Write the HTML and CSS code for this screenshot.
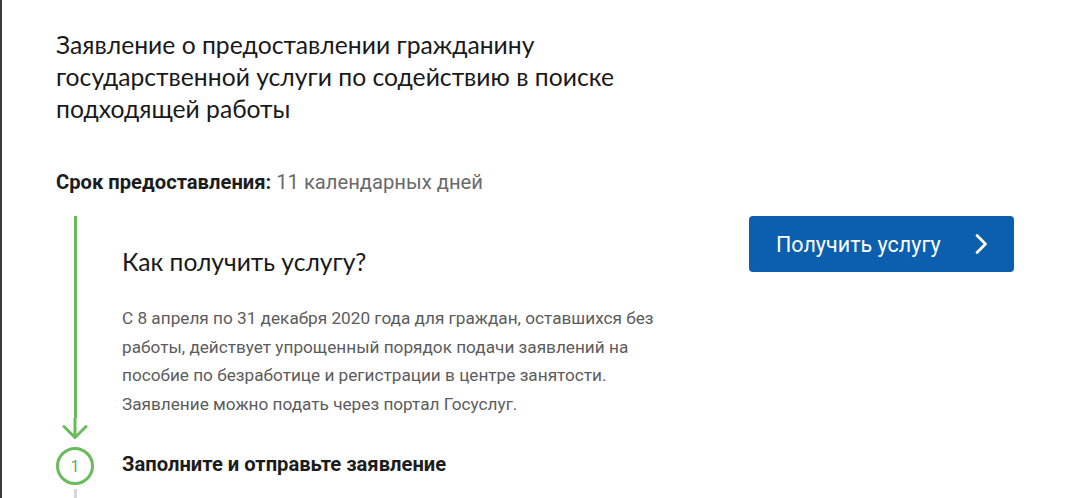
FILE: index.html
```html
<!DOCTYPE html>
<html lang="ru">
<head>
<meta charset="utf-8">
<link rel="stylesheet" href="styles.css">
</head>
<body>
<div class="page">
  <h1 class="title">Заявление о предоставлении гражданину государственной услуги по содействию в поиске подходящей работы</h1>
  <p class="term"><b>Срок предоставления:</b> <span>11 календарных дней</span></p>
  <div class="row">
    <div class="how">
      <div class="marker-top">
        <div class="line"></div>
      </div>
      <div class="intro">
        <h2 class="how-title">Как получить услугу?</h2>
        <p class="how-text">С 8 апреля по 31 декабря 2020 года для граждан, оставшихся без<br>работы, действует упрощенный порядок подачи заявлений на<br>пособие по безработице и регистрации в центре занятости.<br>Заявление можно подать через портал Госуслуг.</p>
      </div>
      <div class="marker-step">
        <svg class="arrow" width="26" height="22" viewBox="0 0 26 22"><path d="M13 0 V19.5 M2 8.5 L13 19.5 L24 8.5" fill="none" stroke="#6abb5c" stroke-width="3" stroke-linecap="round" stroke-linejoin="round"/></svg>
        <span class="num">1</span>
        <span class="tail"></span>
      </div>
      <div class="step-title">Заполните и отправьте заявление</div>
    </div>
    <div class="aside">
      <a class="btn" href="#">Получить услугу
        <svg class="chev" width="14" height="22" viewBox="0 0 14 22"><path d="M3 2.5 L11.5 11 L3 19.5" fill="none" stroke="#fff" stroke-width="2.8" stroke-linecap="round" stroke-linejoin="round"/></svg>
      </a>
    </div>
  </div>
</div>
</body>
</html>
```

FILE: styles.css
```css
html, body {
  margin: 0;
  padding: 0;
  background: #fff;
  height: 100%;
  overflow: hidden;
}
body {
  border-left: 2px solid #3a3a3a;
  box-sizing: border-box;
  color: #1c1c1c;
}
.page {
  padding: 29px 0 0 54px;
}
.title {
  margin: 0;
  width: 590px;
  font-family: "Lato", "Open Sans", sans-serif;
  font-weight: 400;
  font-size: 24.7px;
  line-height: 32px;
  color: #1a1a1a;
}
.term {
  margin: 45px 0 0 0;
  font-family: "Roboto", sans-serif;
  font-size: 20.2px;
  line-height: 24px;
}
.term b {
  font-weight: 700;
  color: #1c1c1c;
}
.term span {
  color: #6a6a6a;
}
.row {
  display: flex;
  margin-top: 22px;
}
.how {
  display: grid;
  grid-template-columns: 38px 560px;
  column-gap: 28px;
}
.marker-top {
  display: flex;
  flex-direction: column;
  align-items: center;
}
.line {
  width: 3px;
  flex: 1;
  background: #6abb5c;
}
.intro {
  padding-top: 30px;
}
.how-title {
  margin: 0;
  font-family: "Lato", "Open Sans", sans-serif;
  font-weight: 400;
  font-size: 24.6px;
  line-height: 32px;
  color: #1a1a1a;
}
.how-text {
  margin: 26px 0 0 0;
  font-family: "Roboto", sans-serif;
  font-size: 17.2px;
  line-height: 28.5px;
  color: #5c5c5c;
}
.marker-step {
  display: flex;
  flex-direction: column;
  align-items: center;
}
.arrow {
  display: block;
}
.num {
  box-sizing: border-box;
  width: 38px;
  height: 38px;
  margin-top: 7px;
  border: 3px solid #6abb5c;
  border-radius: 50%;
  display: flex;
  align-items: center;
  justify-content: center;
  font-family: "Roboto", sans-serif;
  font-size: 16px;
  color: #5daf50;
}
.tail {
  width: 3px;
  height: 12px;
  margin-top: 4px;
  background: #d7d7d7;
}
.step-title {
  padding-top: 34px;
  font-family: "Roboto", sans-serif;
  font-weight: 700;
  font-size: 20.2px;
  line-height: 24px;
  color: #1c1c1c;
}
.aside {
  padding-left: 67px;
}
.btn {
  display: flex;
  align-items: center;
  justify-content: space-between;
  box-sizing: border-box;
  width: 265px;
  height: 56px;
  padding: 0 26px 0 27px;
  background: #0b5fae;
  border-radius: 4px;
  color: #fff;
  text-decoration: none;
  font-family: "Roboto", sans-serif;
  font-size: 21.5px;
}
.chev {
  display: block;
}
```
